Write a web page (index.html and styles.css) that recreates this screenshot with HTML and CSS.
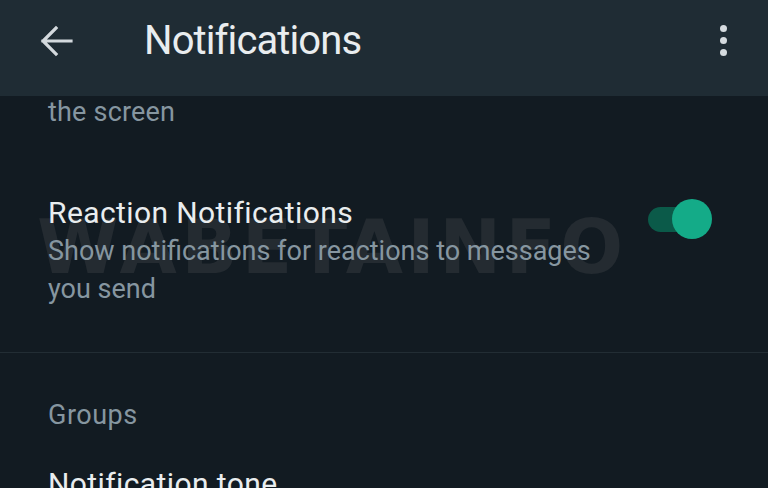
FILE: index.html
```html
<!DOCTYPE html>
<html lang="en">
<head>
  <meta charset="UTF-8">
  <meta name="viewport" content="width=device-width, initial-scale=1.0">
  <title>Notifications</title>
  <link rel="stylesheet" href="styles.css">
</head>
<body>

  <header class="app-bar">
    <svg class="back-icon" width="34" height="32" viewBox="0 0 34 32">
      <path d="M32 16H4M17 3L4 16l13 13" fill="none" stroke="#d3d9dd" stroke-width="3.2" stroke-linecap="square"/>
    </svg>
    <h1 class="app-title">Notifications</h1>
    <div class="menu-dots">
      <span></span><span></span><span></span>
    </div>
  </header>

  <main class="settings">
    <p class="desc-tail">the screen</p>

    <div class="setting-row">
      <div class="setting-text">
        <div class="setting-title">Reaction Notifications</div>
        <div class="setting-sub">Show notifications for reactions to messages you send</div>
      </div>
      <div class="switch">
        <div class="switch-track"></div>
        <div class="switch-knob"></div>
      </div>
    </div>

    <hr class="divider">

    <div class="section-label">Groups</div>
    <div class="setting-title next-item">Notification tone</div>

    <div class="watermark">WABETAINFO</div>
  </main>

</body>
</html>
```

FILE: styles.css
```css
body {
  margin: 0;
  width: 768px;
  height: 488px;
  overflow: hidden;
  background-color: #121b22;
  font-family: Roboto, "Noto Sans", sans-serif;
}

.app-bar {
  height: 96px;
  box-sizing: border-box;
  padding: 0 41px 16px 39px;
  display: flex;
  align-items: center;
  background-color: #1f2c34;
  position: relative;
  z-index: 2;
}

.back-icon {
  display: block;
  margin-top: 2px;
}

.app-title {
  margin: 0 0 0 71px;
  flex: 1;
  font-size: 40px;
  font-weight: 400;
  letter-spacing: -0.9px;
  color: #e9edef;
}

.menu-dots {
  display: flex;
  flex-direction: column;
  gap: 5px;
}

.menu-dots span {
  width: 7px;
  height: 7px;
  border-radius: 50%;
  background-color: #d5dbdf;
}

.settings {
  position: relative;
}

.desc-tail {
  margin: 0;
  padding-left: 48px;
  line-height: 32px;
  font-size: 27px;
  letter-spacing: 0.2px;
  color: #8696a0;
}

.setting-row {
  display: flex;
  align-items: flex-start;
  padding: 66px 56px 44px 48px;
  position: relative;
  z-index: 1;
}

.setting-text {
  flex: 1;
  padding-right: 40px;
}

.setting-title {
  font-size: 30px;
  line-height: 38px;
  letter-spacing: 0.4px;
  color: #e9edef;
}

.setting-sub {
  font-size: 27px;
  line-height: 38px;
  letter-spacing: 0;
  color: #8696a0;
}

.switch {
  position: relative;
  width: 64px;
  height: 40px;
  margin-top: 5px;
}

.switch-track {
  position: absolute;
  left: 0;
  top: 8px;
  width: 56px;
  height: 25px;
  border-radius: 13px;
  background-color: #0b5a49;
}

.switch-knob {
  position: absolute;
  left: 24px;
  top: 0;
  width: 40px;
  height: 40px;
  border-radius: 50%;
  background-color: #14ab88;
}

.divider {
  margin: 0;
  border: none;
  height: 1px;
  background-color: #222d34;
}

.section-label {
  padding: 43px 0 0 48px;
  font-size: 27px;
  line-height: 38px;
  letter-spacing: 0.5px;
  color: #8696a0;
}

.next-item {
  padding: 31px 0 0 48px;
}

.watermark {
  position: absolute;
  left: 37px;
  top: 108px;
  font-family: "DejaVu Sans", sans-serif;
  font-weight: 900;
  font-size: 74px;
  letter-spacing: 4.3px;
  color: #242b31;
  z-index: 0;
}
```
